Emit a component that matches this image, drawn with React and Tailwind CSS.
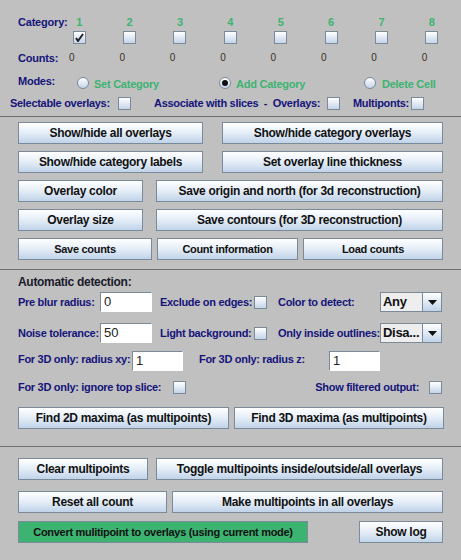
import React from "react";

function Check({ checked }) {
  return (
    <span className="inline-flex w-[13px] h-[13px] shrink-0 items-center justify-center border border-[#7a8a99] bg-linear-to-b from-white to-[#c4d4e8]">
      {checked && (
        <svg width="9" height="9" viewBox="0 0 9 9">
          <path d="M1 5 L3 8 L8 1" stroke="#222" strokeWidth="2" fill="none" />
        </svg>
      )}
    </span>
  );
}

function Radio({ selected }) {
  return (
    <span className="inline-flex w-[12px] h-[12px] shrink-0 items-center justify-center rounded-full border border-[#7a8a99] bg-linear-to-b from-white to-[#c4d4e8]">
      {selected && <span className="w-[6px] h-[6px] rounded-full bg-[#111]" />}
    </span>
  );
}

function Btn({ className, small, children }) {
  return (
    <button
      type="button"
      className={
        "h-[22px] shrink-0 border border-[#7a8a99] bg-linear-to-b from-white via-[#e4edf7] to-[#c0d3e9] text-[#111] font-bold tracking-[-0.3px] whitespace-nowrap " +
        (small ? "text-[11px] " : "text-[12px] ") +
        className
      }
    >
      {children}
    </button>
  );
}

function Field({ className, value }) {
  return (
    <div
      className={
        "h-[20px] shrink-0 bg-white border-t border-l border-t-[#7a8a99] border-l-[#7a8a99] border-r border-b border-r-white border-b-white pl-[3px] text-[13px] leading-[18px] text-[#222] " +
        className
      }
    >
      {value}
    </div>
  );
}

function Combo({ value }) {
  return (
    <div className="flex h-[20px] w-[62px] shrink-0 border border-[#7a8a99]">
      <div className="flex-1 bg-[#eeeeee] pl-[2px] text-[13px] leading-[18px] font-bold tracking-[-0.3px] text-[#111] whitespace-nowrap overflow-hidden">
        {value}
      </div>
      <div className="w-[19px] border-l border-[#7a8a99] bg-linear-to-b from-white to-[#c0d3e9] flex items-center justify-center">
        <svg width="9" height="5" viewBox="0 0 9 5">
          <path d="M0 0 L9 0 L4.5 5 Z" fill="#111" />
        </svg>
      </div>
    </div>
  );
}

const cats = [1, 2, 3, 4, 5, 6, 7, 8];

export default function App() {
  const lbl = "text-[11px] font-bold text-[#14147a] tracking-[-0.3px] whitespace-nowrap";

  return (
    <div className="w-[461px] h-[560px] bg-[#c0c0c0] font-['Liberation_Sans',Arial,sans-serif] overflow-hidden">
      {/* categories */}
      <div className="pt-[16px]">
        <div className="grid grid-cols-[36px_repeat(8,50.4px)] pl-[18px] h-[12px] items-center text-[11px] leading-[12px] font-bold">
          <div className="text-[#14147a] whitespace-nowrap tracking-[-0.2px]">Category:</div>
          {cats.map((n) => (
            <div key={n} className="text-center text-[#3cb371]">{n}</div>
          ))}
        </div>
        <div className="mt-[3px] grid grid-cols-[36px_repeat(8,50.4px)] pl-[18px] h-[13px]">
          <div />
          {cats.map((n) => (
            <div key={n} className="flex justify-center">
              <Check checked={n === 1} />
            </div>
          ))}
        </div>
        <div className="mt-[8px] grid grid-cols-[36px_repeat(8,50.4px)] pl-[18px] h-[12px] items-center text-[11px] leading-[12px]">
          <div className="text-[#14147a] font-bold whitespace-nowrap tracking-[-0.2px]">Counts:</div>
          {cats.map((n) => (
            <div key={n} className="pl-[15px] text-[10px] text-[#3a2f1e]">0</div>
          ))}
        </div>
        <div className="mt-[13px] flex pl-[18px] h-[12px] items-center text-[11px] font-bold tracking-[-0.25px] whitespace-nowrap">
          <div className="w-[59px] text-[#14147a] -mt-[4px]">Modes:</div>
          <div className="w-[142px] flex items-center gap-[5px]">
            <Radio />
            <span className="text-[#3cb371] mt-[2px]">Set Category</span>
          </div>
          <div className="w-[145px] flex items-center gap-[5px]">
            <Radio selected />
            <span className="text-[#3cb371] mt-[2px]">Add Category</span>
          </div>
          <div className="flex items-center gap-[6px]">
            <Radio />
            <span className="text-[#3cb371] mt-[2px]">Delete Cell</span>
          </div>
        </div>
        <div className="mt-[8px] flex pl-[10px] h-[13px] items-center">
          <div className={"w-[108px] " + lbl}>Selectable overlays:</div>
          <Check />
          <div className={"ml-[23px] w-[173px] " + lbl}>Associate with slices&nbsp; - &nbsp;Overlays:</div>
          <Check />
          <div className={"ml-[13px] w-[58px] " + lbl}>Multiponts:</div>
          <Check />
        </div>
      </div>

      <div className="mt-[6px] border-t border-[#6f6f6f]" />

      {/* overlay buttons */}
      <div className="pt-[5px] pl-[18px] flex flex-col gap-[7px]">
        <div className="flex">
          <Btn className="w-[185px]">Show/hide all overlays</Btn>
          <Btn className="ml-[19px] w-[221px]">Show/hide category overlays</Btn>
        </div>
        <div className="flex">
          <Btn className="w-[185px]">Show/hide category labels</Btn>
          <Btn className="ml-[19px] w-[221px]">Set overlay line thickness</Btn>
        </div>
        <div className="flex">
          <Btn className="w-[125px]">Overlay color</Btn>
          <Btn className="ml-[13px] w-[287px]">Save origin and north (for 3d reconstruction)</Btn>
        </div>
        <div className="flex">
          <Btn className="w-[125px]">Overlay size</Btn>
          <Btn className="ml-[13px] w-[287px]">Save contours (for 3D reconstruction)</Btn>
        </div>
        <div className="flex">
          <Btn small className="w-[134px]">Save counts</Btn>
          <Btn small className="ml-[5px] w-[141px]">Count information</Btn>
          <Btn small className="ml-[5px] w-[140px]">Load counts</Btn>
        </div>
      </div>

      <div className="mt-[9px] border-t border-[#6f6f6f]" />

      {/* automatic detection */}
      <div className="pt-[5px] pl-[18px]">
        <div className="h-[14px] text-[12px] leading-[14px] font-bold tracking-[-0.3px] text-[#1a1a2a]">Automatic detection:</div>
        <div className="mt-[3px] h-[20px] flex items-center">
          <div className={"w-[82px] " + lbl}>Pre blur radius:</div>
          <Field className="w-[52px]" value="0" />
          <div className={"ml-[8px] w-[94px] " + lbl}>Exclude on edges:</div>
          <Check />
          <div className={"ml-[11px] w-[102px] " + lbl}>Color to detect:</div>
          <Combo value="Any" />
        </div>
        <div className="mt-[11px] h-[20px] flex items-center">
          <div className={"w-[82px] " + lbl}>Noise tolerance:</div>
          <Field className="w-[52px]" value="50" />
          <div className={"ml-[8px] w-[94px] " + lbl}>Light background:</div>
          <Check />
          <div className={"ml-[11px] w-[102px] " + lbl}>Only inside outlines:</div>
          <Combo value="Disa..." />
        </div>
        <div className="mt-[8px] h-[20px] flex items-center">
          <div className={"w-[114px] -mt-[3px] " + lbl}>For 3D only: radius xy:</div>
          <Field className="w-[51px]" value="1" />
          <div className={"ml-[16px] w-[130px] -mt-[3px] " + lbl}>For 3D only: radius z:</div>
          <Field className="w-[51px]" value="1" />
        </div>
        <div className="mt-[10px] h-[13px] flex items-center pr-[19px]">
          <div className={"w-[155px] " + lbl}>For 3D only: ignore top slice:</div>
          <Check />
          <div className="flex-1" />
          <div className={"mr-[10px] " + lbl}>Show filtered output:</div>
          <Check />
        </div>
        <div className="mt-[13px] flex">
          <Btn className="w-[211px]">Find 2D maxima (as multipoints)</Btn>
          <Btn className="ml-[5px] w-[210px]">Find 3D maxima (as multipoints)</Btn>
        </div>
      </div>

      <div className="mt-[17px] border-t border-[#6f6f6f]" />

      {/* multipoints */}
      <div className="pt-[11px] pl-[18px]">
        <div className="flex">
          <Btn className="w-[130px]">Clear multipoints</Btn>
          <Btn className="ml-[8px] w-[287px]">Toggle multipoints inside/outside/all overlays</Btn>
        </div>
        <div className="mt-[11px] flex">
          <Btn className="w-[149px]">Reset all count</Btn>
          <Btn className="ml-[5px] w-[271px]">Make multipoints in all overlays</Btn>
        </div>
        <div className="mt-[8px] flex">
          <button
            type="button"
            className="h-[22px] w-[290px] border border-[#7a8a99] bg-[#3cb371] text-[11px] font-bold tracking-[-0.3px] text-[#111] whitespace-nowrap"
          >
            Convert mulitipoint to overlays (using current mode)
          </button>
          <Btn className="ml-[51px] w-[84px]">Show log</Btn>
        </div>
      </div>
    </div>
  );
}
